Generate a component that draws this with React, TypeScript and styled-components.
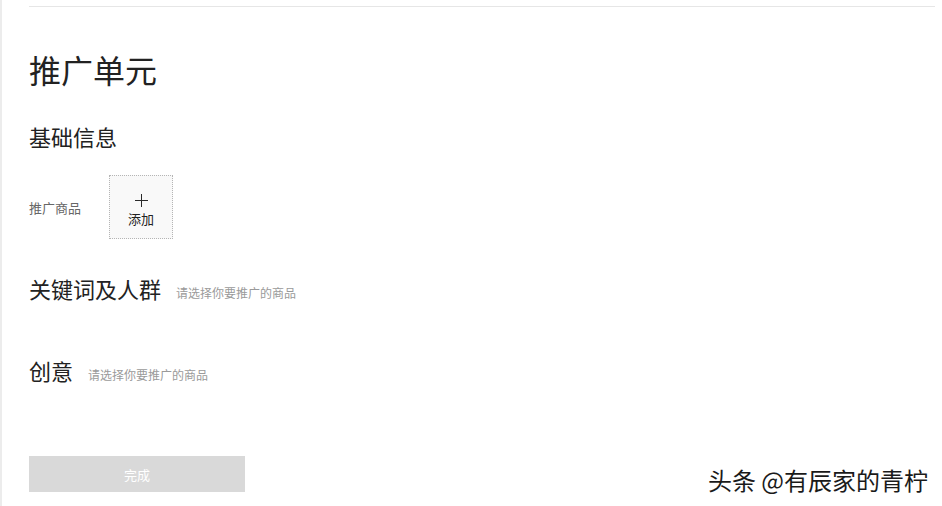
import React from "react";
import styled, { createGlobalStyle } from "styled-components";

const GlobalStyle = createGlobalStyle`
  html, body {
    margin: 0;
    padding: 0;
    background: #fff;
  }
  body {
    font-family: "Noto Sans CJK SC", "Noto Sans", sans-serif;
    color: #333;
  }
`;

const Page = styled.div`
  position: relative;
  height: 506px;
  border-left: 2px solid #ececec;
  box-sizing: border-box;
  padding: 6px 7px 0 27px;
  overflow: hidden;
`;

const TopRule = styled.div`
  height: 1px;
  background: #e6e6e6;
`;

const Title = styled.h1`
  margin: 39px 0 0;
  font-size: 32px;
  font-weight: 400;
  line-height: 46px;
  color: #222;
`;

const SectionHead = styled.div<{ $top: number }>`
  display: flex;
  align-items: baseline;
  gap: 15px;
  margin-top: ${(p) => p.$top}px;
`;

const SectionTitle = styled.h2`
  margin: 0;
  font-size: 22px;
  font-weight: 400;
  line-height: 32px;
  color: #222;
`;

const Hint = styled.span`
  font-size: 12px;
  color: #9a9a9a;
`;

const FieldRow = styled.div`
  display: flex;
  align-items: center;
  margin-top: 23px;
`;

const FieldLabel = styled.span`
  width: 80px;
  font-size: 13px;
  color: #666;
`;

const AddBox = styled.div`
  width: 64px;
  height: 64px;
  box-sizing: border-box;
  padding-top: 6px;
  border: 1px dotted #b5b5b5;
  background: #f9f9f9;
  display: flex;
  flex-direction: column;
  align-items: center;
  justify-content: center;
  gap: 4px;
  color: #222;
  cursor: pointer;
`;

const PlusIcon = styled.span`
  position: relative;
  width: 13px;
  height: 13px;
  &::before,
  &::after {
    content: "";
    position: absolute;
    background: #2a2a2a;
  }
  &::before {
    left: 0;
    top: 6px;
    width: 13px;
    height: 1px;
  }
  &::after {
    left: 6px;
    top: 0;
    width: 1px;
    height: 13px;
  }
`;

const AddText = styled.span`
  font-size: 13px;
  line-height: 16px;
`;

const DoneButton = styled.button`
  margin-top: 70px;
  width: 216px;
  height: 36px;
  border: none;
  background: #d9d9d9;
  color: #fff;
  font-family: inherit;
  font-size: 13px;
  cursor: not-allowed;
`;

const Watermark = styled.div`
  position: absolute;
  right: 14px;
  bottom: 11px;
  font-size: 24px;
  line-height: 30px;
  color: #1a1a1a;
  text-shadow: 1px 1px 1px rgba(255, 255, 255, 0.9), -1px -1px 0 #fff;
`;

export default function App() {
  return (
    <>
      <GlobalStyle />
      <Page>
        <TopRule />
        <Title>推广单元</Title>
        <SectionHead $top={28}>
          <SectionTitle>基础信息</SectionTitle>
        </SectionHead>
        <FieldRow>
          <FieldLabel>推广商品</FieldLabel>
          <AddBox>
            <PlusIcon />
            <AddText>添加</AddText>
          </AddBox>
        </FieldRow>
        <SectionHead $top={33}>
          <SectionTitle>关键词及人群</SectionTitle>
          <Hint>请选择你要推广的商品</Hint>
        </SectionHead>
        <SectionHead $top={50}>
          <SectionTitle>创意</SectionTitle>
          <Hint>请选择你要推广的商品</Hint>
        </SectionHead>
        <DoneButton>完成</DoneButton>
        <Watermark>头条 @有辰家的青柠</Watermark>
      </Page>
    </>
  );
}
